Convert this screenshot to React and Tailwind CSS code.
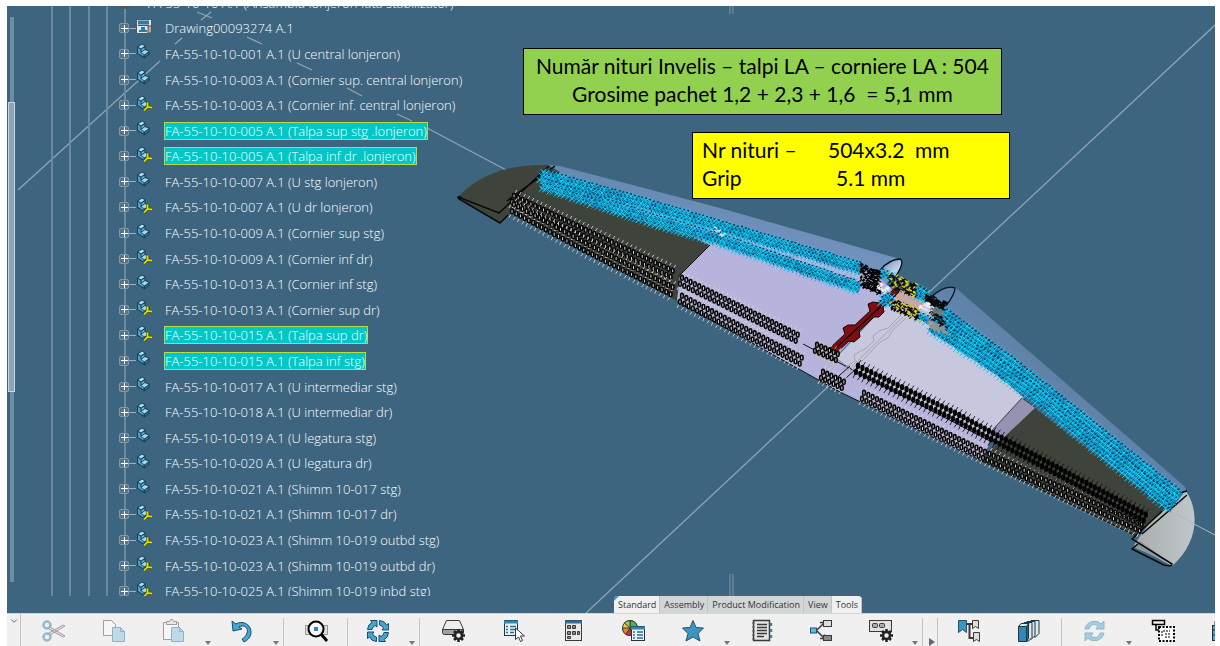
import React from 'react';
import { FiChevronDown } from 'react-icons/fi';

const parts = [
  { name: 'Drawing00093274 A.1', type: 'drawing' },
  { name: 'FA-55-10-10-001 A.1 (U central lonjeron)' },
  { name: 'FA-55-10-10-003 A.1 (Cornier sup. central lonjeron)' },
  { name: 'FA-55-10-10-003 A.1 (Cornier inf. central lonjeron)', sym: true },
  { name: 'FA-55-10-10-005 A.1 (Talpa sup stg .lonjeron)', selected: true },
  { name: 'FA-55-10-10-005 A.1 (Talpa inf dr .lonjeron)', selected: true, sym: true },
  { name: 'FA-55-10-10-007 A.1 (U stg lonjeron)' },
  { name: 'FA-55-10-10-007 A.1 (U dr lonjeron)', sym: true },
  { name: 'FA-55-10-10-009 A.1 (Cornier sup stg)' },
  { name: 'FA-55-10-10-009 A.1 (Cornier inf dr)', sym: true },
  { name: 'FA-55-10-10-013 A.1 (Cornier inf stg)' },
  { name: 'FA-55-10-10-013 A.1 (Cornier sup dr)', sym: true },
  { name: 'FA-55-10-10-015 A.1 (Talpa sup dr)', selected: true, sym: true },
  { name: 'FA-55-10-10-015 A.1 (Talpa inf stg)', selected: true },
  { name: 'FA-55-10-10-017 A.1 (U intermediar stg)' },
  { name: 'FA-55-10-10-018 A.1 (U intermediar dr)' },
  { name: 'FA-55-10-10-019 A.1 (U legatura stg)' },
  { name: 'FA-55-10-10-020 A.1 (U legatura dr)' },
  { name: 'FA-55-10-10-021 A.1 (Shimm 10-017 stg)' },
  { name: 'FA-55-10-10-021 A.1 (Shimm 10-017 dr)', sym: true },
  { name: 'FA-55-10-10-023 A.1 (Shimm 10-019 outbd stg)', sym: true },
  { name: 'FA-55-10-10-023 A.1 (Shimm 10-019 outbd dr)', sym: true },
  { name: 'FA-55-10-10-025 A.1 (Shimm 10-019 inbd stg)', sym: true },
];

const tabs = ['Standard', 'Assembly', 'Product Modification', 'View', 'Tools'];

function PartIcon({ sym }) {
  return (
    <svg width="17" height="17" viewBox="0 0 17 17">
      <path d="M1 4 L6 0.500 L9.500 2.500 V6 L13.500 8 V11.500 L8.500 15.500 L1 10.500Z" fill="#173f58" />
      <path d="M2.500 4 L6 1.500 L8.500 3 L5 5.500Z" fill="#a9e0f5" />
      <path d="M2 5 L4.500 6.500 V9.500 L7.500 11.500 V13.500 L2 10Z" fill="#4f9fc6" />
      <path d="M5.500 6.500 L8.500 4.500 V6.500 L5.500 8.500Z" fill="#62b4da" />
      <path d="M5.500 9.500 L9 7 L12.500 8.500 L8.500 11.500Z" fill="#9ddaf2" />
      <path d="M9 12.500 L12.500 9.800 V11 L9 14Z" fill="#3680a6" />
      {sym && (
        <g fill="none">
          <path d="M11.500 7 V12 M11.500 12 L16 12.500 M11.500 12 L8 15.500" stroke="#5a5c10" strokeWidth="3" />
          <path d="M11.500 7.500 V12 M11.500 12 L16 12.500 M11.500 12 L8 15.500" stroke="#e2e300" strokeWidth="1.600" />
        </g>
      )}
    </svg>
  );
}

function DrawingIcon() {
  return (
    <svg width="17" height="17" viewBox="0 0 17 17">
      <rect x="0.500" y="1.500" width="15" height="14" fill="#dfe5e8" stroke="#5a5553" />
      <rect x="2" y="2.500" width="11" height="4" fill="#2f7ba5" />
      <path d="M2 7.500h11" stroke="#55504e" />
      <path d="M3 14 V12 H5 V9 H9 V12 H11 V14Z" fill="#2f7ba5" />
      <path d="M12 8 h3.500 v7 h-3.500z" fill="#b9a99f" stroke="#5a5553" />
    </svg>
  );
}

function TreeRow({ part }) {
  return (
    <li className="flex items-center">
      <button
        type="button"
        aria-label={`Expand ${part.name}`}
        className="ml-28 flex h-[10px] w-[10px] shrink-0 items-center justify-center rounded-[2px] border border-[#8299aa] bg-[#55748a]"
      >
        <svg viewBox="0 0 7 7" className="h-[7px] w-[7px]">
          <path d="M0 3.500h7M3.500 0v7" stroke="#fff" />
        </svg>
      </button>
      <span className="h-px w-[7px] bg-[#9fb2c0]" />
      <span className="mb-1 mr-[10px] w-[18px] shrink-0">
        {part.type === 'drawing' ? <DrawingIcon /> : <PartIcon sym={part.sym} />}
      </span>
      <span
        className={
          part.selected
            ? 'border border-[#b9dc3c] bg-[#00c8c8] text-white whitespace-nowrap'
            : 'border border-transparent whitespace-nowrap'
        }
      >
        {part.name}
      </span>
    </li>
  );
}

function Tree() {
  return (
    <div className="relative flex min-h-0 flex-1 overflow-hidden">
      <div className="absolute left-[44px] flex h-full w-[57px] justify-between">
        <i className="w-[2px] bg-[#6b8aa0]" />
        <i className="w-[2px] bg-[#6b8aa0]" />
        <i className="w-[2px] bg-[#6b8aa0]" />
        <i className="w-[2px] bg-[#6b8aa0]" />
      </div>
      <div className="absolute left-[117px] h-full w-[2px] bg-[#6b8aa0]" />
      <div className="absolute left-[3px] top-[11px] h-[565px] w-1 bg-[#6f8ea3]" />
      <div className="absolute left-px top-[96px] h-[290px] w-[7px] border border-[#c9d5dd] bg-[#8ca4b5]" />
      <ul className="relative -mt-4 grid h-[614px] auto-rows-fr font-['Open_Sans',sans-serif] text-[13px] font-light leading-4 text-white">
        <li className="flex items-center pl-[112px]">
          <span className="mr-4 h-3 w-3 rounded-full bg-[#5b5552]" />
          <span className="whitespace-nowrap">FA-55-10-10 A.1 (Ansamblu lonjeron fata stabilizator)</span>
        </li>
        {parts.map((p) => (
          <TreeRow key={p.name} part={p} />
        ))}
      </ul>
    </div>
  );
}

// repeatable noise, 0..1
function noise(i) {
  const s = Math.sin(i * 12.9898 + 4.1) * 43758.5453;
  return s - Math.floor(s);
}

// walk along a polyline and return evenly spaced points
function along(points, step) {
  const out = [];
  for (let i = 0; i < points.length - 1; i++) {
    const [x1, y1] = points[i];
    const [x2, y2] = points[i + 1];
    const n = Math.max(1, Math.round(Math.hypot(x2 - x1, y2 - y1) / step));
    for (let k = 0; k < n; k++) {
      out.push([x1 + ((x2 - x1) * k) / n, y1 + ((y2 - y1) * k) / n]);
    }
  }
  return out;
}

// selected rivets, cyan crosses over a darker base
function CyanRivets({ points, rows = 3, gap = 4, seed = 1 }) {
  let cross = '';
  let dots = '';
  let bright = '';
  for (let r = 0; r < rows; r++) {
    along(points, 4).forEach(([px, py], i) => {
      const off = (r - (rows - 1) / 2) * gap;
      const x = px - off * 0.4 + noise(i * 3 + r * 91 + seed);
      const y = py + off + noise(i * 5 + r * 37 + seed);
      cross += `M${x - 3} ${y - 3}l6 6M${x + 3} ${y - 3}l-6 6`;
      dots += `M${x - 1} ${y - 2}h2M${x + 1} ${y + 1}h1`;
      if (noise(i + r * 53 + seed) > 0.4) bright += `M${x - 2} ${y - 2}l4 4M${x - 3} ${y + 3}l6 -6`;
    });
  }
  return (
    <g fill="none">
      <polyline points={points.join(' ')} stroke="#1583ad" strokeWidth={rows * gap - 3} />
      <path d={cross} stroke="#0fb2e6" />
      <path d={dots} stroke="#0b3a5c" strokeWidth="1.500" />
      <path d={bright} stroke="#12dcff" strokeWidth="0.700" />
    </g>
  );
}

// open rivets: small black rings with a light centre
function RingRivets({ points, rows = 2, gap = 6, light = '#d6d6d6', solid }) {
  let rings = '';
  let ticks = '';
  for (let r = 0; r < rows; r++) {
    along(points, 4.8).forEach(([px, py], i) => {
      const x = px + (r % 2 ? -2 : 0);
      const y = py + (r - (rows - 1) / 2) * gap;
      rings += `M${x - 1.3} ${y - 1.3}v2.200a1.3 1.3 0 0 0 2.600 0v-2.200a1.3 1.3 0 0 0 -2.600 0`;
      ticks += `M${x - 3} ${y + 6}l${2 + (i % 2)} -4M${x + 1} ${y - 3}l2 -3`;
    });
  }
  return (
    <g>
      <path d={ticks} stroke={solid ? '#111' : light} fill="none" strokeWidth="0.900" />
      <path d={rings} stroke="#050505" strokeWidth="1.600" fill={solid ? '#050505' : light} />
    </g>
  );
}

function Scribble({ cx, cy, w, h, color, n = 40 }) {
  let d = '';
  for (let i = 0; i < n; i++) {
    const u = noise(i + cx) - 0.5;
    const v = noise(i * 2 + cy + 500) - 0.5;
    d += `M${cx + u * w} ${cy + v * h + u * w * 0.45}l${i % 2 ? 3 : -2} 2`;
  }
  return <path d={d} stroke={color} strokeWidth="1.300" fill="none" />;
}

function Scene() {
  return (
    <svg
      className="absolute inset-0 h-full w-full"
      viewBox="7 6 1208 607"
      preserveAspectRatio="xMinYMin slice"
      role="img"
      aria-label="Stabilizer assembly"
    >
      <defs>
        <linearGradient id="skinLeft" x1="0" y1="1" x2="0.300" y2="0">
          <stop offset="0" stopColor="#7d9bcb" />
          <stop offset="1" stopColor="#6587ad" />
        </linearGradient>
        <linearGradient id="skinRight" x1="0" y1="1" x2="0.700" y2="0.300">
          <stop offset="0.400" stopColor="#6d8db8" />
          <stop offset="1" stopColor="#557b9d" />
        </linearGradient>
        <linearGradient id="lip" x1="0" y1="0" x2="1" y2="1">
          <stop offset="0" stopColor="#5f80a8" />
          <stop offset="0.700" stopColor="#c3d5ee" />
          <stop offset="1" stopColor="#7f9cc2" />
        </linearGradient>
        <linearGradient id="tip" x1="0" y1="0" x2="1" y2="0">
          <stop offset="0" stopColor="#a9acab" />
          <stop offset="1" stopColor="#c0c7cb" />
        </linearGradient>
      </defs>

      {/* construction lines */}
      <g stroke="#8fa5b5" strokeWidth="1.300" fill="none">
        <path d="M18 190L160 61M175 44L182 38M201 20L211 12" />
        <path d="M197 12l15 6M247 37l15 7M297 63l15 7M347 88l15 8M397 114l15 7M427 128L508 171" />
        <path d="M586 613L1215 25" />
        <path d="M730 6v8M733 6v8M730 574v26M733 574v26" stroke="#76899a" />
      </g>

      {/* skins */}
      <path d="M548 165L560 166L720 208L893 257Q903 259 899 271L885 285L700 238L552 178Z" fill="url(#skinLeft)" />
      <path d="M880 270Q890 258 900 259Q905 261 896 276Z" fill="url(#lip)" />
      <path d="M880 270Q890 259 900 259Q905 262 896 276" fill="none" stroke="#0b1218" strokeWidth="1.300" />
      <path d="M933 297Q945 284 956 288L1183 485Q1190 491 1183 500L1100 450L945 325Z" fill="url(#skinRight)" />
      <path d="M930 298Q945 284 955 288Q955 294 946 306" fill="none" stroke="#0b1218" strokeWidth="1.300" />

      {/* left wing */}
      <path d="M458 197C477 177 505 164 548 165L560 172L512 213L500 223Z" fill="#3e433b" />
      <path d="M540 175L715 240L680 275L677 301L512 214Z" fill="#3e433b" />
      <path d="M600 195L870 270L895 292L835 358L853 370L990 440L982 461L840 392L677 301L680 275L710 245Z" fill="#b6b3dc" />
      <path d="M710 245L678 277" stroke="#111" />
      <path d="M458 197L499 213L549 166M508 215L500 223L459 199Q456 195 462 198M507 201L555 166" fill="none" stroke="#080808" strokeWidth="1.500" />

      {/* right wing */}
      <path d="M893 297L925 300L950 332L1024 398L986 439L853 370L836 358Z" fill="#c7c7dd" />
      <path d="M1022 398L1036 408L1002 443L986 437Z" fill="#9592b3" stroke="#222" strokeWidth="0.800" />
      <path d="M1035 408L1165 508L1136 536L980 461L1000 441Z" fill="#3e433b" />
      <path d="M1186 491C1200 512 1198 543 1172 566L1134 545L1150 522Z" fill="url(#tip)" />
      <path d="M1133 547L1140 541L1172 564Z" fill="#8d989e" />
      <path d="M1187 491L1183 492L1132 539L1172 564Q1172 567 1164 565L1132 549L1138 544M1187 495L1142 534" fill="none" stroke="#080808" strokeWidth="1.500" />
      <path d="M1177 515L1215 535" stroke="#a9bac5" />

      <path d="M677 301L840 392L982 461L1136 536M803 344L853 370L990 441" fill="none" stroke="#111" />

      {/* ribs */}
      <path
        d="M901 315L888 328L879 331L873 336L874 341L865 349L859 352L854 355L855 361L843 369M906 318L892 331L888 338L882 341L877 345L866 357L862 361L856 365L850 373M903 317L847 371"
        fill="none"
        stroke="#a5a5ab"
      />
      <path d="M850 366L830 384M856 369L836 387" stroke="#111" />
      <path d="M898 288L925 302L920 312L895 301Z" fill="#c9a7a5" />
      <path
        d="M894 289L879 303L873 302L868 304L870 311L855 325L848 325L843 328L845 334L830 348L835 354L849 341L854 342L860 337L859 331L874 317L879 317L884 312L883 307L899 292Z"
        fill="#7f0f14"
        stroke="#160202"
      />
      <path d="M892 296L835 349" stroke="#160202" strokeWidth="1.500" />

      {/* lower rivet lines */}
      <RingRivets points={[[514, 199], [590, 235], [677, 276]]} gap={6} />
      <RingRivets points={[[514, 208], [590, 249], [677, 293]]} gap={7} />
      <RingRivets points={[[682, 281], [802, 340]]} />
      <RingRivets points={[[682, 299], [806, 363]]} />
      <RingRivets points={[[817, 348], [842, 359]]} light="#cfc18e" />
      <RingRivets points={[[823, 375], [848, 387]]} />
      <RingRivets points={[[864, 396], [985, 455], [1146, 530]]} />
      <RingRivets points={[[858, 369], [955, 416], [1150, 520]]} solid />

      {/* selected rivet lines */}
      <CyanRivets points={[[541, 175], [640, 203], [862, 269]]} seed={3} />
      <CyanRivets points={[[543, 184], [640, 216], [720, 240], [860, 288]]} seed={9} />
      <CyanRivets points={[[938, 312], [1015, 369], [1179, 499]]} rows={4} seed={17} />
      <CyanRivets points={[[932, 325], [985, 359], [1028, 389], [1173, 506]]} rows={4} seed={29} />
      <CyanRivets points={[[882, 273], [894, 279]]} rows={2} />
      <CyanRivets points={[[882, 298], [893, 302]]} rows={3} />
      <CyanRivets points={[[915, 291], [928, 298]]} rows={3} />
      <CyanRivets points={[[918, 316], [930, 321]]} rows={2} />

      {/* centre joint */}
      <Scribble cx={870} cy={278} w={18} h={23} color="#050505" n={210} />
      <Scribble cx={883} cy={288} w={9} h={8} color="#f2f2f2" n={14} />
      <Scribble cx={902} cy={284} w={26} h={13} color="#0a0a0a" n={130} />
      <Scribble cx={902} cy={284} w={28} h={15} color="#d8d21c" n={32} />
      <Scribble cx={904} cy={308} w={26} h={11} color="#0a0a0a" n={110} />
      <Scribble cx={904} cy={308} w={28} h={14} color="#d8d21c" n={26} />
      <Scribble cx={935} cy={301} w={20} h={9} color="#0b0b0b" n={90} />
      <Scribble cx={926} cy={306} w={12} h={9} color="#f2f2f2" n={18} />
      <Scribble cx={937} cy={326} w={18} h={8} color="#8e9492" n={60} />
      <Scribble cx={938} cy={318} w={16} h={11} color="#111" n={40} />
      <Scribble cx={938} cy={312} w={14} h={8} color="#77797a" n={20} />
      <Scribble cx={720} cy={232} w={14} h={6} color="#bfe9f5" n={8} />
    </svg>
  );
}

function Icon({ label, children, faded }) {
  return (
    <button type="button" aria-label={label} className="flex w-[60px] shrink-0 justify-center pt-[5px]">
      <svg viewBox="0 0 24 24" className={faded ? 'h-6 w-6 opacity-45' : 'h-6 w-6'} fill="none" stroke="#3a3a3a">
        {children}
      </svg>
    </button>
  );
}

function Arrow() {
  return (
    <button type="button" aria-label="More" className="flex w-2 shrink-0 items-end justify-center pb-px">
      <svg viewBox="0 0 6 4" className="h-1 w-[6px]">
        <path d="M0 0h6L3 4Z" fill="#777" />
      </svg>
    </button>
  );
}

function Sep({ tight }) {
  return <span className={tight ? 'mt-1 w-px shrink-0 bg-[#c4c4c4]' : 'mx-[3px] mt-1 w-px shrink-0 bg-[#c4c4c4]'} />;
}

function Gear() {
  return (
    <g stroke="#222" strokeWidth="2.500">
      <path d="M17.500 10v13M11 16.500h13M13 12l9 9M22 12l-9 9" />
      <circle cx="17.500" cy="16.500" r="3.500" fill="#f0f0f0" />
    </g>
  );
}

function Toolbar() {
  return (
    <div className="flex h-[33px] shrink-0 overflow-hidden border-t border-[#d5d5d5] bg-[#f0f0f0]">
      <button type="button" aria-label="Collapse" className="mr-[3px] flex w-[14px] shrink-0 justify-center border-r border-[#c4c4c4] pt-[2px] text-[#555]">
        <FiChevronDown size={10} />
      </button>
      <Icon label="Cut" faded>
        <circle cx="5" cy="6" r="3.500" stroke="#2c7ba4" strokeWidth="2.500" />
        <circle cx="5" cy="18" r="3.500" stroke="#2c7ba4" strokeWidth="2.500" />
        <path d="M8 8L23 17L21 18L7 10ZM8 16L23 7L21 6L7 14Z" fill="#ccc" stroke="#444" />
      </Icon>
      <Icon label="Copy" faded>
        <path d="M1.500 1.500h8l4 4v11h-12z" fill="#fff" />
        <path d="M10.500 8.500h8l4 4v10h-12z" fill="#7fc0de" stroke="#22668b" />
        <path d="M18.500 8.500v4h4" stroke="#22668b" />
      </Icon>
      <Icon label="Paste" faded>
        <path d="M1.500 3.500h15v17h-15z" fill="#fff" />
        <path d="M4.500 5.500v-3h3l1-2h2l1 2h3v3z" fill="#ddd" />
        <path d="M9.500 8.500h8l4 4v10h-12z" fill="#7fc0de" stroke="#22668b" />
        <path d="M17.500 8.500v4h4" stroke="#22668b" />
      </Icon>
      <Arrow />
      <Icon label="Undo">
        <path d="M2 2L3 12L12 10L9 8C14 5 19 9 17 14C16 17 14 19 12 20L14 23C18 21 21 18 21 13C21 5 12 1 6 5Z" fill="#4ba3cf" stroke="#174f70" />
      </Icon>
      <Arrow />
      <Sep />
      <Icon label="Fit all">
        <rect x="0.500" y="6.500" width="22" height="9" fill="#ddd" stroke="#999" />
        <circle cx="11" cy="10" r="7.500" fill="#f7f7f7" stroke="#000" strokeWidth="2" />
        <rect x="9" y="8" width="4" height="4" fill="#2c86b5" stroke="none" />
        <path d="M16 15L22 22" stroke="#000" strokeWidth="3" />
      </Icon>
      <Sep tight />
      <Icon label="Update">
        <g fill="#4ba3cf" stroke="#174f70">
          <path d="M1.500 10.500Q2 5 6 3.500L4.500 1.500H11V8L9 6.500Q6.500 7.500 6 10.500Z" />
          <path d="M13.500 1.500Q19 2 20.500 6L22.500 4.500V11H16L17.500 9Q16.500 6.500 13.500 6Z" />
          <path d="M22.500 13.500Q22 19 18 20.500L19.500 22.500H13V16L15 17.500Q17.500 16.500 18 13.500Z" />
          <path d="M10.500 22.500Q5 22 3.500 18L1.500 19.500V13H8L6.500 15Q7.500 17.500 10.500 18Z" />
        </g>
      </Icon>
      <Arrow />
      <Sep />
      <Icon label="Drive settings">
        <path d="M5.500 1.500h13l4 9h-21z" fill="#ececec" />
        <path d="M1.500 10.500h21v3q0 2-2 2h-17q-2 0-2-2z" fill="#a0a0a0" />
        <Gear />
      </Icon>
      <Icon label="Select in list">
        <rect x="3.500" y="1.500" width="13" height="15" fill="#e9f2f7" stroke="#24323b" />
        <path d="M3 3h14" stroke="#2f86b3" strokeWidth="3" />
        <path d="M5 7.500h2M9 7.500h6M5 10.500h2M9 10.500h6M5 13.500h2M9 13.500h4" stroke="#2f6f93" strokeWidth="1.500" />
        <path d="M14.500 9v11.500l3-2.500l2 4.500l2-1l-2-4.500h4z" fill="#fff" />
      </Icon>
      <Icon label="Table">
        <rect x="4.500" y="1.500" width="16" height="20" fill="#e9e9e9" />
        <path d="M4 3h17" stroke="#2f6f93" strokeWidth="3" />
        <path d="M6.500 6.500h3v3h-3zM11.500 6.500h3v3h-3zM6.500 12.500h3v3h-3zM11.500 12.500h3v3h-3zM16.500 12.500h2v3h-2zM6.500 17.500h3v2h-3z" fill="#888" />
      </Icon>
      <Icon label="Color list">
        <g>
          <circle cx="9" cy="9" r="7.500" fill="#f2c94c" />
          <path d="M9 9V1.500A7.500 7.500 0 0 1 16.500 9Z" fill="#3fb950" />
          <path d="M9 9V1.500A7.500 7.500 0 0 0 3.500 4Z" fill="#9bd05a" />
          <path d="M9 9H1.500A7.500 7.500 0 0 0 5 15.500Z" fill="#e8862d" />
          <path d="M9 9L5 15.500A7.500 7.500 0 0 0 11 16Z" fill="#d8322c" />
        </g>
        <rect x="10.500" y="7.500" width="13" height="14" fill="#e9f2f7" stroke="#24323b" />
        <path d="M10 9h14" stroke="#2f86b3" strokeWidth="3" />
        <path d="M12 13h2M16 13h6M12 16h2M16 16h6M12 19h2M16 19h6" stroke="#2f6f93" strokeWidth="1.500" />
      </Icon>
      <Icon label="Favorites">
        <path d="M12 1.500L15 8.500L22.500 9L17 14.500L19 22L12 18L5 22L7 14.500L1.500 9L9 8.500Z" fill="#3f93c0" stroke="#1d5272" />
      </Icon>
      <Arrow />
      <Icon label="Notebook">
        <rect x="4.500" y="1.500" width="16" height="20" fill="#e4e4e4" strokeWidth="1.500" />
        <path d="M8 5.500h10M8 8.500h10M8 11.500h10M8 14.500h10M8 17.500h7" strokeWidth="1.500" />
        <path d="M3 4h3M3 8h3M3 12h3M3 16h3M3 20h3" stroke="#666" />
        <path d="M22 4v3M22 10v3M22 16v3" stroke="#2f86b3" strokeWidth="2.500" />
      </Icon>
      <Icon label="Relations">
        <path d="M8 11L15 4M8 12l7 7" strokeWidth="1.500" />
        <path d="M11 3.500h4.500v4M11 19.500h4.500v-4" strokeWidth="1.500" />
        <rect x="1.500" y="9" width="6" height="5" fill="#62b8e0" stroke="#1d5272" />
        <rect x="14.500" y="1.500" width="8" height="6" fill="#ddd" />
        <rect x="14.500" y="16.500" width="8" height="5" fill="#888" />
      </Icon>
      <Icon label="Command settings">
        <rect x="0.500" y="1.500" width="22" height="11" fill="#e0e0e0" />
        <rect x="3.500" y="4.500" width="5" height="4" rx="1" fill="#aaa" />
        <rect x="10.500" y="4.500" width="5" height="4" rx="1" fill="#aaa" />
        <Gear />
      </Icon>
      <Arrow />
      <Sep />
      <button type="button" aria-label="Next" className="mx-px flex w-[9px] shrink-0 items-end justify-center">
        <svg viewBox="0 0 6 8" className="h-2 w-[6px]">
          <path d="M0 0L6 4L0 8Z" fill="#667" />
        </svg>
      </button>
      <Sep tight />
      <Icon label="Bookmarks">
        <path d="M2.500 1.500h8v12l-4-3l-4 3z" fill="#3f93c0" stroke="#1d5272" />
        <path d="M11 5h5M13.500 5v14h4" strokeWidth="2" />
        <path d="M16.500 1.500h6v8l-3-2l-3 2zM17.500 13.500h6v9l-3-2l-3 2z" fill="#ddd" />
      </Icon>
      <Icon label="Catalog">
        <g stroke="#1c3644" fill="#dfe6ea">
          <path d="M12.500 4.500L15 1.500h8v13l-4 4z" />
          <path d="M8.500 5.500L11 2.500h8v14l-4 4z" />
          <path d="M5.500 6.500L8 3.500h8v15l-4 4z" />
          <path d="M2.500 7.500L5 4.500h8l-2 3z" />
          <path d="M2.500 7.500h8v15h-8z" fill="#3587b3" />
          <path d="M10.500 7.500l2-3v15l-2 3z" fill="#20658a" />
        </g>
      </Icon>
      <Sep />
      <Icon label="Refresh" faded>
        <path d="M2 10C3 2 14 0 18 5L21 2V10H13L15 7C11 4 7 6 6 10ZM21 14C20 22 9 24 5 19L2 22V14H10L8 17C12 20 16 18 17 14Z" fill="#4ba3cf" stroke="#2c6f93" />
      </Icon>
      <Arrow />
      <Icon label="Structure">
        <rect x="1.500" y="1.500" width="12" height="4" stroke="#000" strokeWidth="1.500" />
        <path d="M5 6v5h3" stroke="#000" strokeWidth="1.500" />
        <rect x="8" y="8" width="15" height="14" fill="#fff" stroke="#000" strokeWidth="2" strokeDasharray="2 1.500" />
        <path d="M12 12h7M14 15h6M14 18h6M11 12v6" stroke="#000" strokeDasharray="2 1" />
      </Icon>
      <Icon label="Properties">
        <rect x="1.500" y="6.500" width="18" height="15" fill="#4ba3cf" stroke="#24323b" />
        <path d="M4 6V2h8v4M2 11h17M2 16h17" stroke="#24323b" />
      </Icon>
    </div>
  );
}

function Tabs() {
  return (
    <nav className="relative ml-[607px] flex h-[17px] w-max overflow-hidden rounded-t font-['Open_Sans',sans-serif] text-[9px] text-[#333]">
      {tabs.map((t) => (
        <button
          key={t}
          type="button"
          className={
            t === 'Standard' || t === 'Tools'
              ? 'border-r border-[#bfc3c5] bg-[#f0f0f0] pl-1 pr-[3px]'
              : 'border-r border-[#bfc3c5] bg-[#d3d6d7] pl-1 pr-[3px]'
          }
        >
          {t}
        </button>
      ))}
      <span className="absolute left-0 top-0 h-0 w-0 border-r-[5px] border-t-[5px] border-r-transparent border-t-[#3f93c0]" />
    </nav>
  );
}

export default function App() {
  return (
    <div className="flex h-screen flex-col overflow-hidden bg-white pl-[7px] pr-[5px] pt-[6px]">
      <main className="relative flex min-h-0 flex-1 flex-col overflow-hidden bg-[#3d657f]">
        <Scene />
        <Tree />
        <Tabs />
        <div className="absolute left-[516px] top-[42px] whitespace-pre border border-black bg-[#92d050] px-3 pb-[6px] pt-[3px] text-center font-['Lato',sans-serif] text-[21px] leading-7 text-black">
          <p>Număr nituri Invelis – talpi LA – corniere LA : 504</p>
          <p>Grosime pachet 1,2 + 2,3 + 1,6  = 5,1 mm</p>
        </div>
        <div className="absolute left-[685px] top-[126px] grid w-[318px] grid-cols-[126px_1fr] whitespace-pre border border-black bg-[#ffff00] px-[9px] pb-[6px] pt-[3px] font-['Lato',sans-serif] text-[21px] leading-7 text-black">
          <span>Nr nituri –</span>
          <span>504x3.2  mm</span>
          <span>Grip</span>
          <span className="pl-2">5.1 mm</span>
        </div>
      </main>
      <Toolbar />
    </div>
  );
}
